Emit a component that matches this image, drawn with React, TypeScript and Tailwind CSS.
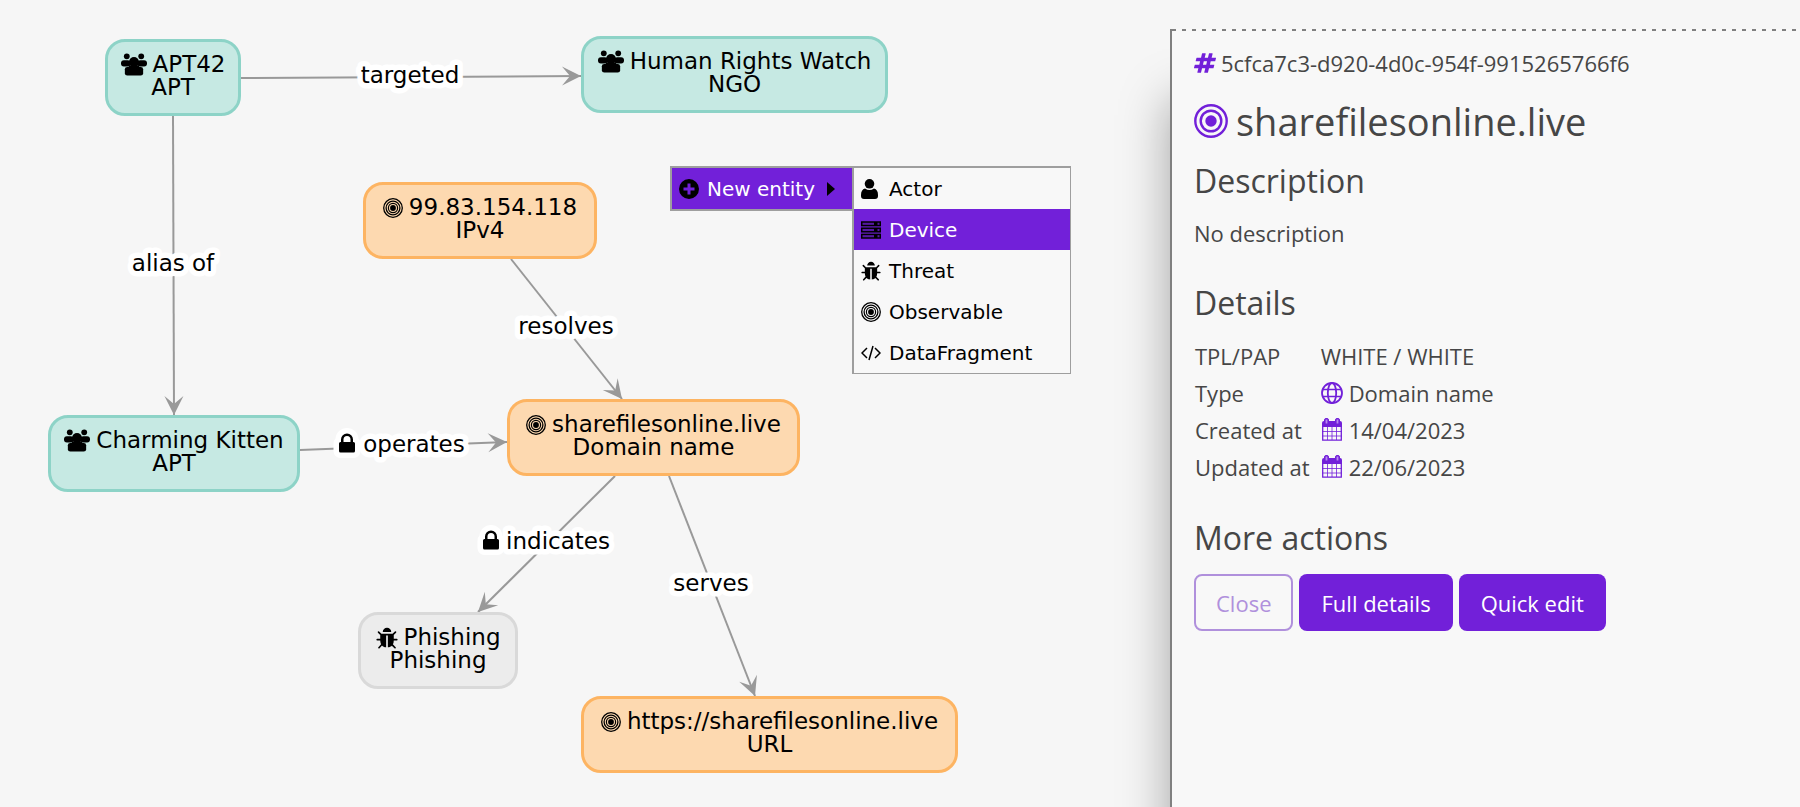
import type { ReactNode, SVGProps } from "react";

type IconProps = SVGProps<SVGSVGElement>;

function UsersIcon(props: IconProps) {
  return (
    <svg viewBox="0 0 27 23" fill="currentColor" aria-hidden="true" {...props}>
      <circle cx="6" cy="3" r="3" />
      <circle cx="21" cy="3" r="3" />
      <rect x="0" y="7" width="10" height="6.500" rx="3" />
      <rect x="17" y="7" width="10" height="6.500" rx="3" />
      <circle cx="13.500" cy="9" r="5.200" />
      <rect x="4" y="14" width="19" height="9" rx="2.500" />
      <rect x="8" y="12.500" width="11" height="4" />
    </svg>
  );
}

function TargetIcon(props: IconProps) {
  return (
    <svg viewBox="0 0 20 20" fill="none" stroke="currentColor" strokeWidth="1.300" aria-hidden="true" {...props}>
      <circle cx="10" cy="10" r="9.300" />
      <circle cx="10" cy="10" r="6.900" />
      <circle cx="10" cy="10" r="4.600" strokeWidth="1.200" />
      <circle cx="10" cy="10" r="2.900" fill="currentColor" stroke="none" />
    </svg>
  );
}

function BullseyeIcon(props: IconProps) {
  return (
    <svg viewBox="0 0 34 34" fill="none" stroke="currentColor" strokeWidth="2.400" aria-hidden="true" {...props}>
      <circle cx="17" cy="17" r="15.700" />
      <circle cx="17" cy="17" r="10.300" />
      <circle cx="17" cy="17" r="5.700" fill="currentColor" stroke="none" />
    </svg>
  );
}

function BugIcon(props: IconProps) {
  return (
    <svg viewBox="0 0 1664 1664" fill="currentColor" aria-hidden="true" {...props}>
      <path d="M1632 960q0 26-19 45t-45 19h-224q0 171-67 290l208 209q19 19 19 45t-19 45q-18 19-45 19t-45-19l-198-197q-5 5-15 13t-42 28.500-65 36.500-82 29-97 13V640H768v896q-51 0-101.500-13.500t-87-33-66-39-43.500-32.500l-15-14-183 207q-20 21-48 21-24 0-43-16-19-18-20.500-44.500T179 1523l202-227q-61-130-61-272H96q-26 0-45-19t-19-45 19-45 45-19h224V602L147 429q-19-19-19-45t19-45 45-19 45 19l173 173h844l173-173q19-19 45-19t45 19 19 45-19 45l-173 173v294h224q26 0 45 19t19 45zM1152 384H512q0-133 93.500-226.500T832 64t226.500 93.500T1152 384z" />
    </svg>
  );
}

function UserIcon(props: IconProps) {
  return (
    <svg viewBox="0 0 20 20" fill="currentColor" aria-hidden="true" {...props}>
      <circle cx="8.500" cy="4.800" r="4.800" />
      <path d="M0 16q0-5.500 4-6.500 4.500 3 9 0 4 1 4 6.500v1q0 3-3 3H3q-3 0-3-3z" />
    </svg>
  );
}

function ServerIcon(props: IconProps) {
  return (
    <svg viewBox="0 0 20 20" fill="none" stroke="currentColor" strokeWidth="1.500" aria-hidden="true" {...props}>
      {[2, 8.2, 14.4].map((y) => (
        <g key={y}>
          <rect x="0.750" y={y} width="18.500" height="3.600" fill="currentColor" fillOpacity="0.250" />
          <rect x="13" y={y} width="3.500" height="3.600" fill="currentColor" stroke="none" />
        </g>
      ))}
    </svg>
  );
}

function CodeIcon(props: IconProps) {
  return (
    <svg viewBox="0 0 20 20" fill="none" stroke="currentColor" strokeWidth="1.500" aria-hidden="true" {...props}>
      <path d="M6 5 1 10l5 5M14 5 19 10l-5 5M12 3 8 17" />
    </svg>
  );
}

function PlusCircleIcon(props: IconProps) {
  return (
    <svg viewBox="0 0 20 20" fill="currentColor" aria-hidden="true" {...props}>
      <path
        fillRule="evenodd"
        d="M10 0a10 10 0 1 1 0 20a10 10 0 1 1 0-20zM8.500 4.500v4h-4v3h4v4h3v-4h4v-3h-4v-4z"
      />
    </svg>
  );
}

function HashIcon(props: IconProps) {
  return (
    <svg viewBox="0 128 1728 1536" fill="currentColor" aria-hidden="true" {...props}>
      <path d="M959 1024l64-256H769l-64 256h254zm768-504l-56 224q-7 24-31 24h-327l-64 256h311q15 0 25 12 10 14 6 28l-56 224q-5 24-31 24h-327l-81 328q-7 24-31 24H841q-16 0-26-12-9-12-6-28l78-312H633l-81 328q-7 24-31 24H296q-15 0-25-12-9-12-6-28l78-312H32q-15 0-25-12-9-12-6-28l56-224q7-24 31-24h327l64-256H168q-15 0-25-12-10-14-6-28l56-224q5-24 31-24h327l81-328q7-24 32-24h224q15 0 25 12 9 12 6 28l-78 312h254l81-328q7-24 32-24h224q15 0 25 12 9 12 6 28l-78 312h311q15 0 25 12 9 12 6 28z" />
    </svg>
  );
}

function GlobeIcon(props: IconProps) {
  return (
    <svg viewBox="0 0 22 22" fill="none" stroke="currentColor" strokeWidth="1.800" aria-hidden="true" {...props}>
      <circle cx="11" cy="11" r="10" />
      <ellipse cx="11" cy="11" rx="4.200" ry="10" />
      <path d="M1.500 7.500h19M1.500 14.500h19" strokeWidth="1.500" />
    </svg>
  );
}

function CalendarIcon(props: IconProps) {
  return (
    <svg viewBox="0 0 22 24" fill="none" stroke="currentColor" aria-hidden="true" {...props}>
      <path d="M1 5q0-2 2-2h16q2 0 2 2v4H1z" fill="currentColor" stroke="none" />
      <rect x="3.500" y="0.500" width="4" height="5" rx="1.500" fill="currentColor" />
      <rect x="14.500" y="0.500" width="4" height="5" rx="1.500" fill="currentColor" />
      <path d="M5.500 1.500v4M16.500 1.500v4" className="stroke-[#b98aee]" strokeWidth="1.800" />
      <path d="M6.500 9v13M11 9v13M15.500 9v13M1 13.500h20M1 18h20" strokeWidth="0.800" />
      <path d="M1.700 8v14.200h18.600V8" strokeWidth="1.300" />
    </svg>
  );
}

const palette = {
  teal: "border-[#8dd3c7] bg-[#c6e9e3]",
  orange: "border-[#fdb462] bg-[#fdd9b0]",
  gray: "border-[#d9d9d9] bg-[#ececec]",
};

const nodeIcons = {
  users: <UsersIcon className="h-[23px] w-[26px]" />,
  target: <TargetIcon className="size-5" />,
  bug: <BugIcon className="size-[22px]" />,
};

interface GraphNode {
  name: string;
  kind: string;
  icon: keyof typeof nodeIcons;
  color: keyof typeof palette;
  x: number;
  y: number;
  width: number;
}

const nodes: GraphNode[] = [
  { name: "APT42", kind: "APT", icon: "users", color: "teal", x: 105, y: 39, width: 136 },
  { name: "Human Rights Watch", kind: "NGO", icon: "users", color: "teal", x: 581, y: 36, width: 307 },
  { name: "99.83.154.118", kind: "IPv4", icon: "target", color: "orange", x: 363, y: 182, width: 234 },
  { name: "Charming Kitten", kind: "APT", icon: "users", color: "teal", x: 48, y: 415, width: 252 },
  { name: "sharefilesonline.live", kind: "Domain name", icon: "target", color: "orange", x: 507, y: 399, width: 293 },
  { name: "Phishing", kind: "Phishing", icon: "bug", color: "gray", x: 358, y: 612, width: 160 },
  { name: "https://sharefilesonline.live", kind: "URL", icon: "target", color: "orange", x: 581, y: 696, width: 377 },
];

interface GraphEdge {
  label: string;
  locked?: boolean;
  from: [number, number];
  to: [number, number];
  at: [number, number];
}

const edges: GraphEdge[] = [
  { label: "targeted", from: [241, 78], to: [581, 76], at: [410, 75] },
  { label: "alias of", from: [173, 116], to: [174, 415], at: [173, 263] },
  { label: "resolves", from: [511, 259], to: [622, 399], at: [566, 326] },
  { label: "operates", locked: true, from: [300, 450], to: [507, 442], at: [402, 444] },
  { label: "indicates", locked: true, from: [615, 476], to: [478, 612], at: [546, 541] },
  { label: "serves", from: [669, 476], to: [755, 696], at: [711, 583] },
];

function Edges() {
  return (
    <svg className="absolute inset-0 size-full" role="group" aria-label="Relations">
      {edges.map(({ label, locked, from, to, at }) => {
        const angle = (Math.atan2(to[1] - from[1], to[0] - from[0]) * 180) / Math.PI;
        return (
          <g key={label}>
            <line x1={from[0]} y1={from[1]} x2={to[0]} y2={to[1]} stroke="#999999" strokeWidth="2" />
            <path
              d="M0 0L-19 -9.500L-11 0L-19 9.500Z"
              fill="#999999"
              transform={`translate(${to[0]} ${to[1]}) rotate(${angle})`}
            />
            <g fill="#000000" stroke="#ffffff" strokeWidth="11" strokeLinejoin="round" paintOrder="stroke">
              {locked && (
                <path
                  transform={`translate(${at[0] - 63} ${at[1] - 11})`}
                  d="M1.500 9H2V6.500a6 6 0 0 1 12 0V9h.5a1.500 1.500 0 0 1 1.500 1.500v7.500a1.500 1.500 0 0 1-1.500 1.500h-13A1.500 1.500 0 0 1 0 18v-7.500A1.500 1.500 0 0 1 1.500 9z"
                />
              )}
              <text x={locked ? at[0] + 12 : at[0]} y={at[1] + 8} textAnchor="middle">
                {label}
              </text>
            </g>
            {locked && (
              <path
                transform={`translate(${at[0] - 63} ${at[1] - 11})`}
                d="M4.500 9h7V6.500a3.500 3.500 0 0 0-7 0z"
                fill="#ffffff"
              />
            )}
          </g>
        );
      })}
    </svg>
  );
}

function MenuItem({ icon, label, active }: { icon: ReactNode; label: string; active?: boolean }) {
  return (
    <li>
      <button
        type="button"
        className={`flex h-[41px] w-full items-center gap-2 px-[7px] ${active ? "bg-[#7220d9] text-white" : ""}`}
      >
        <span className="text-black">{icon}</span>
        {label}
      </button>
    </li>
  );
}

function ContextMenu() {
  return (
    <nav
      aria-label="New entity"
      className="absolute top-[166px] left-[670px] flex items-start font-['DejaVu_Sans',sans-serif] text-[20px] leading-6 text-black"
    >
      <button
        type="button"
        className="flex h-[45px] w-[182px] items-center gap-2 border-y-2 border-l-2 border-[#9e9e9e] bg-[#7220d9] px-[7px] text-white"
      >
        <PlusCircleIcon className="size-5 text-black" />
        New entity
        <svg viewBox="0 0 8 14" className="ml-1 h-[14px] w-2 fill-black" aria-hidden="true">
          <path d="M0 0L8 7L0 14Z" />
        </svg>
      </button>
      <ul className="w-[219px] border-t-2 border-r border-b border-l-2 border-[#9e9e9e] bg-[#f8f8f8]">
        <MenuItem icon={<UserIcon className="size-5" />} label="Actor" />
        <MenuItem icon={<ServerIcon className="size-5" />} label="Device" active />
        <MenuItem icon={<BugIcon className="size-5" />} label="Threat" />
        <MenuItem icon={<TargetIcon className="size-5" />} label="Observable" />
        <MenuItem icon={<CodeIcon className="size-5" />} label="DataFragment" />
      </ul>
    </nav>
  );
}

function Graph() {
  return (
    <main className="relative min-w-0 flex-1 font-['DejaVu_Sans',sans-serif] text-[23px] leading-[23px] text-black">
      <Edges />
      {nodes.map((node) => (
        <article
          key={node.name}
          className={`absolute flex h-[77px] flex-col items-center rounded-[20px] border-3 pt-[11px] whitespace-nowrap ${palette[node.color]}`}
          style={{ left: node.x, top: node.y, width: node.width }}
        >
          <h3 className="flex h-[23px] items-center gap-1.5">
            {nodeIcons[node.icon]}
            {node.name}
          </h3>
          <p>{node.kind}</p>
        </article>
      ))}
      <ContextMenu />
    </main>
  );
}

const details: { label: string; value: string; icon?: ReactNode }[] = [
  { label: "TPL/PAP", value: "WHITE / WHITE" },
  { label: "Type", value: "Domain name", icon: <GlobeIcon className="size-[22px]" /> },
  { label: "Created at", value: "14/04/2023", icon: <CalendarIcon className="h-6 w-[22px]" /> },
  { label: "Updated at", value: "22/06/2023", icon: <CalendarIcon className="h-6 w-[22px]" /> },
];

function DetailsPanel() {
  return (
    <aside className="relative mt-[29px] w-[35%] shrink-0 border-l-2 border-[#808080] bg-[#f8f8f8] font-['Open_Sans',sans-serif] text-[22px] leading-[30px] text-[#464646] shadow-[0_70px_46px_rgba(0,0,0,0.340)]">
      <div className="h-0.5 bg-[repeating-linear-gradient(to_right,#808080_0px,#808080_4px,transparent_4px,transparent_10px)]" />
      <div className="pt-[17px] pl-[22px]">
        <p className="flex items-center gap-[5px]">
          <HashIcon className="h-[22px] w-[22px] text-[#7220d9]" />
          5cfca7c3-d920-4d0c-954f-9915265766f6
        </p>
        <h1 className="mt-[17px] flex items-center gap-2 text-[38px] leading-[52px]">
          <BullseyeIcon className="size-[34px] text-[#7220d9]" />
          sharefilesonline.live
        </h1>
        <h2 className="mt-3 text-[32px] leading-[44px]">Description</h2>
        <p className="mt-[15px]">No description</p>
        <h2 className="mt-[33px] text-[32px] leading-[44px]">Details</h2>
        <table className="mt-3 border-collapse text-left">
          <tbody>
            {details.map(({ label, value, icon }) => (
              <tr key={label} className="h-[37px]">
                <th scope="row" className="p-0 pr-[11px] pl-px font-normal">
                  {label}
                </th>
                <td className="p-0">
                  <span className="flex items-center gap-1.5">
                    {icon && <span className="text-[#7220d9]">{icon}</span>}
                    {value}
                  </span>
                </td>
              </tr>
            ))}
          </tbody>
        </table>
        <h2 className="mt-[31px] text-[32px] leading-[44px]">More actions</h2>
        <div className="mt-[14px] flex flex-wrap gap-1.5">
          <button type="button" className="h-[57px] rounded-lg border-2 border-[#b090dc] px-5 text-[#b090dc]">
            Close
          </button>
          <button type="button" className="h-[57px] rounded-lg bg-[#7220d9] px-[22px] text-white">
            Full details
          </button>
          <button type="button" className="h-[57px] rounded-lg bg-[#7220d9] px-[22px] text-white">
            Quick edit
          </button>
        </div>
      </div>
    </aside>
  );
}

export default function App() {
  return (
    <div className="flex min-h-screen overflow-hidden bg-[#f6f6f6]">
      <Graph />
      <DetailsPanel />
    </div>
  );
}
